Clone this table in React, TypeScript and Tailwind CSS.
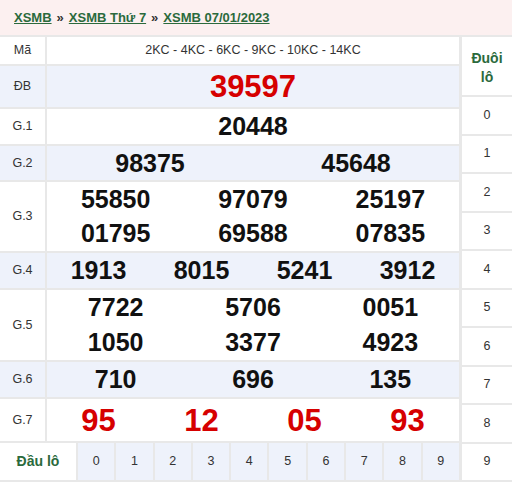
import React from "react";

const F = { fontFamily: '"Liberation Sans", Arial, sans-serif' };

function Row({
  label,
  h,
  bg,
  children,
}: {
  label: string;
  h: string;
  bg: string;
  children: React.ReactNode;
}) {
  return (
    <div className={`grid grid-cols-[45px_1fr] gap-[2px] ${h}`}>
      <div className={`${bg} flex items-center justify-center text-[12.5px] text-[#333]`}>{label}</div>
      <div className={`${bg}`}>{children}</div>
    </div>
  );
}

const num = "text-[25px] font-bold text-[#111] leading-none";
const red = "text-[31px] font-bold text-[#d60000] leading-none";

export default function App() {
  const blue = "bg-[#eef2fb]";
  const white = "bg-white";
  return (
    <div style={F} className="w-[512px] h-[482px] bg-[#e8e8e8] overflow-hidden">
      <div className="h-[35px] bg-[#fcf0f0] px-[14px] flex items-center text-[13px] font-bold">
        <a className="text-[#2b6a3c] underline">XSMB</a>
        <span className="mx-[5px] text-[#333]">»</span>
        <a className="text-[#2b6a3c] underline">XSMB Thứ 7</a>
        <span className="mx-[5px] text-[#333]">»</span>
        <a className="text-[#2b6a3c] underline">XSMB 07/01/2023</a>
      </div>
      <div className="flex gap-[3px] pt-[2px]">
        <div className="w-[459px] flex flex-col gap-[2px]">
          <Row label="Mã" h="h-[27px]" bg={white}>
            <div className="h-full flex items-center justify-center text-[12.5px] text-[#333]">
              2KC - 4KC - 6KC - 9KC - 10KC - 14KC
            </div>
          </Row>
          <Row label="ĐB" h="h-[41px]" bg={blue}>
            <div className="h-full flex items-center justify-center">
              <span className={red}>39597</span>
            </div>
          </Row>
          <Row label="G.1" h="h-[35px]" bg={white}>
            <div className="h-full flex items-center justify-center">
              <span className={num}>20448</span>
            </div>
          </Row>
          <Row label="G.2" h="h-[34px]" bg={blue}>
            <div className="h-full grid grid-cols-2 items-center justify-items-center">
              <span className={num}>98375</span>
              <span className={num}>45648</span>
            </div>
          </Row>
          <Row label="G.3" h="h-[69px]" bg={white}>
            <div className="h-full grid grid-cols-3 grid-rows-2 items-center justify-items-center">
              {["55850", "97079", "25197", "01795", "69588", "07835"].map((n) => (
                <span key={n} className={num}>{n}</span>
              ))}
            </div>
          </Row>
          <Row label="G.4" h="h-[35px]" bg={blue}>
            <div className="h-full grid grid-cols-4 items-center justify-items-center">
              {["1913", "8015", "5241", "3912"].map((n) => (
                <span key={n} className={num}>{n}</span>
              ))}
            </div>
          </Row>
          <Row label="G.5" h="h-[70px]" bg={white}>
            <div className="h-full grid grid-cols-3 grid-rows-2 items-center justify-items-center">
              {["7722", "5706", "0051", "1050", "3377", "4923"].map((n) => (
                <span key={n} className={num}>{n}</span>
              ))}
            </div>
          </Row>
          <Row label="G.6" h="h-[35px]" bg={blue}>
            <div className="h-full grid grid-cols-3 items-center justify-items-center">
              {["710", "696", "135"].map((n) => (
                <span key={n} className={num}>{n}</span>
              ))}
            </div>
          </Row>
          <Row label="G.7" h="h-[42px]" bg={white}>
            <div className="h-full grid grid-cols-4 items-center justify-items-center">
              {["95", "12", "05", "93"].map((n) => (
                <span key={n} className={red}>{n}</span>
              ))}
            </div>
          </Row>
          <div className="grid grid-cols-[76px_repeat(10,1fr)] gap-[2px] h-[37px]">
            <div className="bg-white flex items-center justify-center text-[14px] font-bold text-[#2b6a3c]">
              Đầu lô
            </div>
            {[0, 1, 2, 3, 4, 5, 6, 7, 8, 9].map((d) => (
              <div key={d} className={`${blue} flex items-center justify-center text-[12.5px] text-[#333]`}>
                {d}
              </div>
            ))}
          </div>
        </div>
        <div className="flex-1 flex flex-col gap-[2px]">
          <div className="h-[58px] bg-white flex items-center justify-center text-center text-[14px] font-bold text-[#2b6a3c] leading-[19px] pt-[4px]">
            Đuôi
            <br />
            lô
          </div>
          {[0, 1, 2, 3, 4, 5, 6, 7, 8, 9].map((d) => (
            <div key={d} className="flex-1 bg-white flex items-center justify-center text-[12.5px] text-[#333]">
              {d}
            </div>
          ))}
        </div>
      </div>
    </div>
  );
}
